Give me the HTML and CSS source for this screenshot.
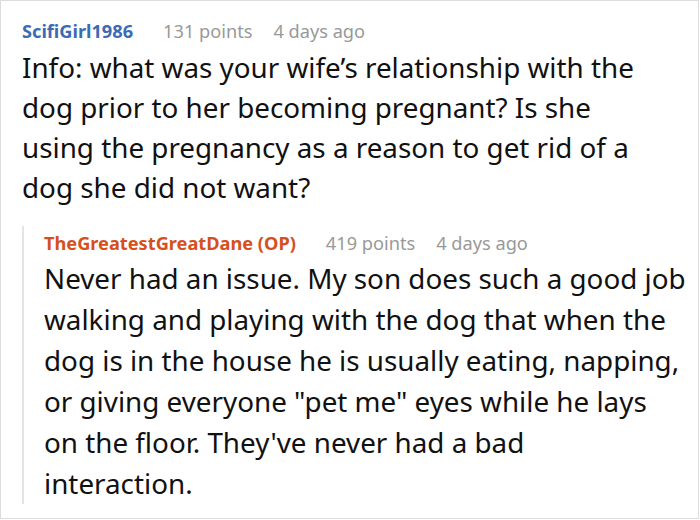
FILE: index.html
```html
<!DOCTYPE html>
<html>
<head>
<meta charset="utf-8">
<link rel="stylesheet" href="styles.css">
</head>
<body>
<div class="thread">
  <div class="comment">
    <div class="meta">
      <span class="author">ScifiGirl1986</span>
      <span class="points">131 points</span>
      <span class="time">4 days ago</span>
    </div>
    <p class="text">Info: what was your wife’s relationship with the<br>dog prior to her becoming pregnant? Is she<br>using the pregnancy as a reason to get rid of a<br>dog she did not want?</p>
    <div class="reply">
      <div class="meta">
        <span class="author op">TheGreatestGreatDane (OP)</span>
        <span class="points">419 points</span>
        <span class="time">4 days ago</span>
      </div>
      <p class="text reply-text">Never had an issue. My son does such a good job<br>walking and playing with the dog that when the<br>dog is in the house he is usually eating, napping,<br>or giving everyone "pet me" eyes while he lays<br>on the floor. They've never had a bad<br>interaction.</p>
    </div>
  </div>
</div>
</body>
</html>
```
FILE: styles.css
```css
html, body {
  margin: 0;
  padding: 0;
  background: #fff;
}
.thread {
  box-sizing: border-box;
  width: 699px;
  height: 519px;
  border: 1px solid #dcdcdc;
  font-family: "Noto Sans", "Open Sans", sans-serif;
  overflow: hidden;
}
.comment {
  padding: 18px 0 0 21px;
}
.meta {
  display: flex;
  align-items: baseline;
  font-size: 18.2px;
  line-height: 24px;
  color: #999;
  white-space: nowrap;
}
.author {
  font-weight: bold;
  color: #3b6bb5;
  margin-right: 30px;
}
.author.op {
  color: #d5501c;
}
.points {
  margin-right: 21px;
}
.text {
  margin: 4px 0 0;
  font-size: 27.8px;
  line-height: 40px;
  color: #111;
  white-space: nowrap;
}
.reply {
  margin-top: 19px;
  border-left: 2px solid #e4e4e4;
  padding: 5px 0 0 20px;
}
.reply-text {
  margin: 3px 0 -3px;
  line-height: 41px;
}
```
